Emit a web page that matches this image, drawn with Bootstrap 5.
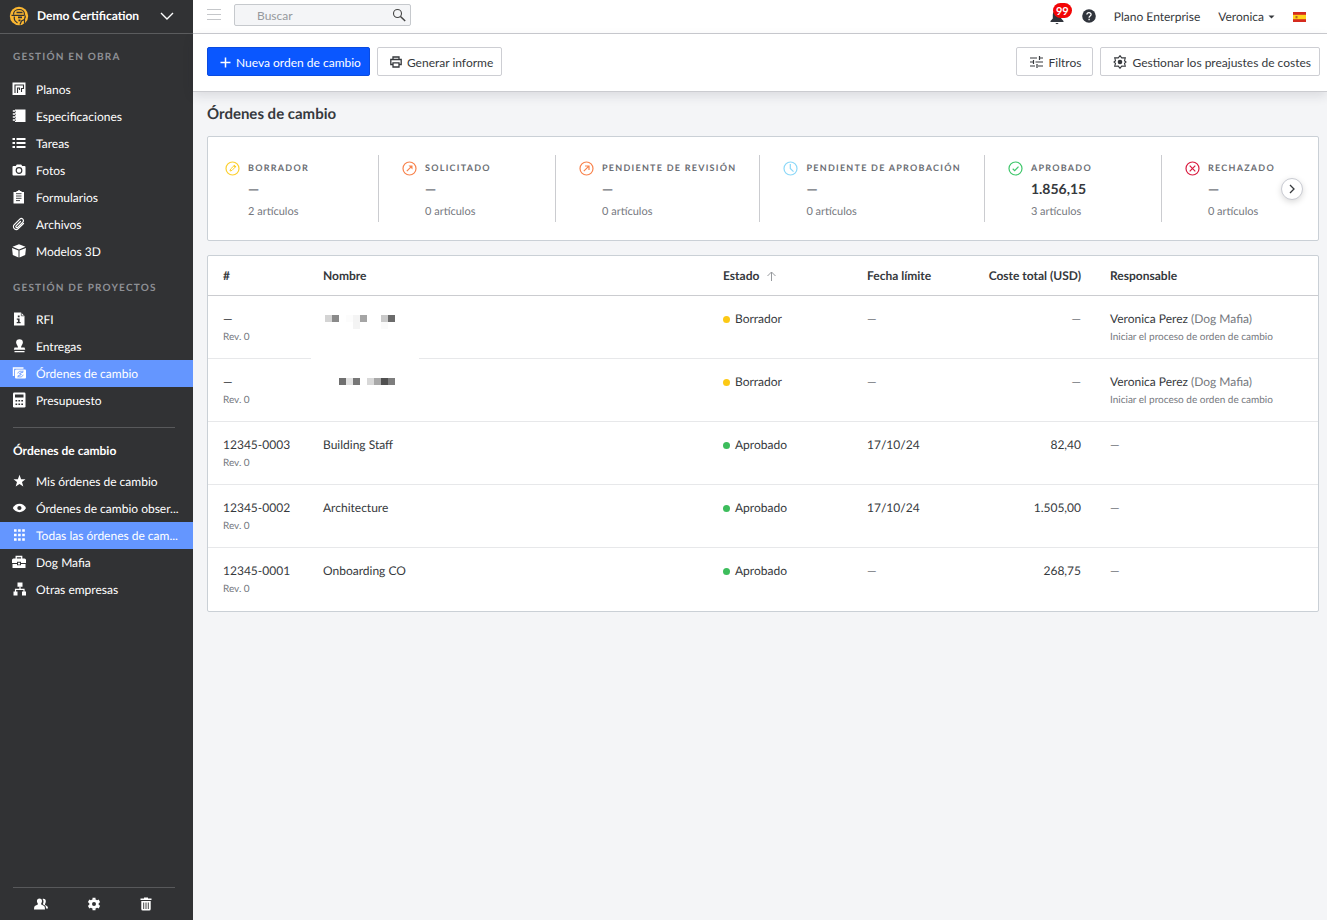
<!DOCTYPE html>
<html lang="es">
<head>
<meta charset="utf-8">
<meta name="viewport" content="width=device-width, initial-scale=1">
<title>Órdenes de cambio</title>
<link href="https://cdn.jsdelivr.net/npm/bootstrap@5.3.0/dist/css/bootstrap.min.css" rel="stylesheet">
<style>
  body { font-family: Lato, "Liberation Sans", sans-serif; font-size: 12px; line-height: 18px; color: #36393d; background: #f4f5f7; text-rendering: geometricPrecision; }
  a { color: inherit; text-decoration: none; }
  svg { display: block; flex: none; }
  /* sidebar */
  .side { width: 193px; background: #313234; color: #fff; }
  .side-head { height: 34px; border-bottom: 1px solid #5b5c5e; padding: 0 19px 2px 9px; }
  .side-title { color: #8e9095; font-size: 10px; font-weight: 700; letter-spacing: .12em; line-height: 14px; padding: 16px 13px 12px; margin: 0; }
  .side-list { list-style: none; margin: 0; padding: 0; }
  .side-list + .side-title { padding-bottom: 11px; }
  .side-link { display: flex; align-items: center; gap: 10px; height: 27px; padding-left: 12px; white-space: nowrap; }
  .side-link svg { margin-bottom: 2px; }
  .side-link.on { background: #6496ff; }
  .side-rule { border-top: 1px solid #58595b; margin: 0 18px 0 13px; }
  .side-rule.mid { margin-top: 13px; }
  .side-sub { font-size: 12px; font-weight: 700; line-height: 18px; margin: 0; padding: 14px 13px 8px; }
  .side-foot { height: 32px; padding: 0 40px 0 33px; }
  .plain { background: none; border: 0; padding: 0; color: inherit; }
  /* top bars */
  .topbar { height: 34px; background: #fff; border-bottom: 1px solid #cbccd0; padding: 0 21px 0 14px; }
  .find { position: relative; width: 177px; margin-left: 13px; }
  .find input { height: 22px; padding: 2px 26px 0 22px; font-size: 12px; background: #f4f5f7; border: 1px solid #c6c9cd; border-radius: 2px; }
  .find input::placeholder { color: #96999d; }
  .find button { position: absolute; right: 5px; top: 4px; }
  .who { gap: 18px; }
  .alerts { position: relative; }
  .count { position: absolute; left: 3px; top: -6px; min-width: 19px; height: 15px; border-radius: 8px; background: #f20505; color: #fff; font-size: 11px; font-weight: 700; line-height: 15px; text-align: center; }
  .tools { background: #fff; border-bottom: 1px solid #cbccd0; box-shadow: 0 4px 10px rgba(40,45,60,.12); padding: 13px 7px 15px 14px; gap: 7px; }
  .tool { display: inline-flex; align-items: center; gap: 5px; height: 29px; padding: 3px 8px 0 12px; font-size: 12px; line-height: 18px; border: 1px solid #cdced3; border-radius: 2px; background: #fff; color: #36393d; }
  .tool svg { margin-bottom: 2px; }
  .tool.main { background: #0a57ff; border-color: #0a4be0; color: #fff; }
  .tool.filter { padding-left: 13px; padding-right: 11px; }
  .tool:hover { background: #f4f5f8; border-color: #cdced3; color: #36393d; }
  .page { padding: 12px 8px 24px 14px; }
  .page-title { font-size: 15px; font-weight: 700; line-height: 20px; margin: 0 0 12px; }
  .panel { background: #fff; border: 1px solid #cad0d6; border-radius: 2px; }
  /* totals strip */
  .totals { position: relative; padding: 18px 17px; margin-bottom: 14px; }
  .total { display: flex; gap: 8px; flex: none; min-width: 177px; height: 67px; padding: 0 23px; border-right: 1px solid #cbccd0; }
  .total:first-child { min-width: 154px; padding-left: 0; }
  .total:last-child { border: 0; min-width: 0; padding-right: 0; }
  .total > svg { margin-top: 6px; }
  .total-name { font-size: 9px; font-weight: 700; letter-spacing: .14em; line-height: 14px; padding: 6px 0 4px; color: #6b6e74; white-space: nowrap; }
  .total-sum { font-size: 14px; font-weight: 700; line-height: 20px; }
  .total-qty { font-size: 11px; line-height: 18px; padding-top: 4px; color: #75787e; }
  .next { position: absolute; right: 15px; top: 41px; width: 22px; height: 22px; border: 1px solid #c9cbd2; border-radius: 50%; background: #fff; display: flex; align-items: center; justify-content: center; padding: 0; box-shadow: 0 2px 6px rgba(0,0,0,.15); }
  /* orders table */
  .orders { table-layout: fixed; width: 100%; margin: 0; color: inherit; }
  .orders th { height: 39px; padding: 2px 0 0 15px; font-weight: 700; vertical-align: middle; }
  .orders td { position: relative; height: 63px; padding: 14px 0 0 15px; vertical-align: top; border-top: 1px solid #e7e8ea; }
  .orders tbody tr:first-child td { border-top-color: #cbccd0; }
  .orders tbody tr:last-child td { height: 64px; }
  .orders .money { text-align: right; padding-left: 0; padding-right: 14px; }
  .w-id { width: 100px; } .w-state { width: 144px; } .w-date { width: 121px; } .w-cost { width: 122px; } .w-resp { width: 223px; }
  .note { display: block; font-size: 10px; line-height: 18px; color: #75787e; }
  .soft { color: #75787e; }
  .dot { display: inline-block; width: 7px; height: 7px; border-radius: 50%; margin-right: 5px; background: #3dbd5c; }
  .dot.draft { background: #fcc915; }
  .redacted { position: absolute; left: 3px; top: 5px; background: #fff; }
</style>
</head>
<body>
<div class="d-flex min-vh-100">

<aside class="side d-flex flex-column flex-shrink-0">
  <header class="side-head d-flex align-items-center">
    <svg width="20" height="20" viewBox="0 0 20 20"><circle cx="10" cy="10" r="9.200" fill="#fbb731"/><path d="M4.500 8.500C4.500 5 7.500 3.500 10.200 3.500s5.300 1.800 5.300 5M2.500 9.300h12.500M5.300 10.500v2.500q0 2 3.200 4M15.500 8.500q1.500 2 0 4.500M11 18.500l1.500-3.500 3-1.500v4" fill="none" stroke="#313234" stroke-width="1.200"/><path d="M7.500 5.800h6v1.400h-6zM9 10.500h4v1.700H9zM9.500 13.500h2v1.800h-2z" fill="#313234"/></svg>
    <b class="ms-2">Demo Certification</b>
    <button class="plain ms-auto" aria-label="Cambiar de proyecto"><svg width="14" height="8" viewBox="0 0 14 8"><path d="M1 1l6 6 6-6" fill="none" stroke="#fff" stroke-width="1.400"/></svg></button>
  </header>
  <nav aria-label="Proyecto">
    <h2 class="side-title">GESTIÓN EN OBRA</h2>
    <ul class="side-list">
      <li><a class="side-link" href="#"><svg width="14" height="14" viewBox="0 0 14 14"><path fill="#fff" d="M.5.500h13v12.500H.5z"/><path d="M3 11V3h8.500v3.500H9.500V10M5.500 11V6h2v2" fill="none" stroke="#313234" stroke-width="1.100"/></svg>Planos</a></li>
      <li><a class="side-link" href="#"><svg width="14" height="14" viewBox="0 0 14 14"><path fill="#fff" d="M3 .5h10.500v12.500H3z"/><path d="M2 2.500h2M2 5.500h2M2 8.500h2M2 11.200h2" stroke="#313234" stroke-width="1.500"/><path d="M.8 2h2.700M.8 5h2.700M.8 8h2.700M.8 11h2.700" stroke="#fff" stroke-width="1.300"/></svg>Especificaciones</a></li>
      <li><a class="side-link" href="#"><svg width="14" height="14" viewBox="0 0 14 14"><path d="M.5 3h2.500M4.500 3h9M.5 7h2.500M4.500 7h9M.5 11h2.500M4.500 11h9" stroke="#fff" stroke-width="2"/></svg>Tareas</a></li>
      <li><a class="side-link" href="#"><svg width="14" height="14" viewBox="0 0 14 14"><path fill="#fff" d="M1.500 3h2.300l1-1.500h4.400l1 1.500h2.300q1 0 1 1v7.500q0 1-1 1h-11q-1 0-1-1V4q0-1 1-1z"/><circle cx="7" cy="7.500" r="2.800" fill="none" stroke="#313234" stroke-width="1.200"/></svg>Fotos</a></li>
      <li><a class="side-link" href="#"><svg width="14" height="14" viewBox="0 0 14 14"><path fill="#fff" d="M1.500 2h3V1H6a1 1 0 0 1 2 0h1.500v1H12v11.500H1.500z"/><path d="M4 3.700h5.500M4 6h5.500M4 8.300h5.500M4 10.600h4" stroke="#313234" stroke-width=".9"/></svg>Formularios</a></li>
      <li><a class="side-link" href="#"><svg width="14" height="14" viewBox="0 0 14 14"><path d="M11.500 6.500L6.300 11.700a2.800 2.800 0 0 1-4-4l5.500-5.500a2 2 0 0 1 3 3L5.700 10.300a1 1 0 0 1-1.500-1.500L8.500 4.500" fill="none" stroke="#fff" stroke-width="1.200" stroke-linecap="round"/></svg>Archivos</a></li>
      <li><a class="side-link" href="#"><svg width="14" height="14" viewBox="0 0 14 14"><path fill="#fff" d="M7 .3l6.500 2.500L7 5.400.5 2.800zM0 4l6.500 2.600v7L.8 11zM14 4L7.500 6.600v7l5.700-2.600z"/></svg>Modelos 3D</a></li>
    </ul>
    <h2 class="side-title">GESTIÓN DE PROYECTOS</h2>
    <ul class="side-list">
      <li><a class="side-link" href="#"><svg width="14" height="14" viewBox="0 0 14 14"><path fill="#fff" d="M2 .5h7L12.500 4v9.500H2z"/><path d="M5.800 3.500h1.800v1.700H5.800zM4.800 6.500h2.800V10h1v1.300H4.700V10h1.200V7.800H4.800z" fill="#313234"/><path d="M9.300.8v3h3" fill="none" stroke="#313234" stroke-width=".7"/></svg>RFI</a></li>
      <li><a class="side-link" href="#"><svg width="14" height="14" viewBox="0 0 14 14"><path fill="#fff" d="M7.500.2a3.400 3.400 0 0 1 3.400 3.300c0 2-1.900 3-1.900 5h3.500l.8 2.300H1.800L2.500 8.500H6c0-2-1.900-3-1.900-5A3.400 3.400 0 0 1 7.500.2zM2.500 12h10v1.300h-10z"/></svg>Entregas</a></li>
      <li><a class="side-link on" href="#" aria-current="page"><svg width="14" height="14" viewBox="0 0 14 14"><path d="M1.500 10V2h10" fill="none" stroke="#fff" stroke-width="1.400"/><rect x="3" y="3.600" width="11" height="9" rx="1" fill="#fff"/><path d="M5.700 7.500a3 3 0 0 1 5-1.500M11.200 8.700a3 3 0 0 1-5 1.500M10.900 4.500v1.900H9M6 11.600V9.700h1.900M9.300 7H7.800v1h1.300v1H7.500" fill="none" stroke="#6496ff" stroke-width=".8"/></svg>Órdenes de cambio</a></li>
      <li><a class="side-link" href="#"><svg width="14" height="16" viewBox="0 0 14 16"><rect x="1" y=".5" width="12.500" height="15" rx="1.200" fill="#fff"/><path fill="#313234" d="M3 2.500h8.500v3H3zM3.500 8h1.700v1.500H3.500zM6.400 8h1.700v1.500H6.400zM9.300 8H11v1.500H9.300zM3.500 11.500h1.700V13H3.500zM6.400 11.500h1.700V13H6.400zM9.300 11.500H11V13H9.300z"/></svg>Presupuesto</a></li>
    </ul>
    <div class="side-rule mid"></div>
    <h2 class="side-sub">Órdenes de cambio</h2>
    <ul class="side-list">
      <li><a class="side-link" href="#"><svg width="14" height="14" viewBox="0 0 14 14"><path fill="#fff" d="M7.500.8l1.600 4.400 4.400.1-3.500 2.800 1.300 4.500-3.800-2.600-3.800 2.600L5 8.100 1.500 5.300l4.400-.1z"/></svg>Mis órdenes de cambio</a></li>
      <li><a class="side-link" href="#"><svg width="14" height="14" viewBox="0 0 14 14"><path fill="#fff" d="M.8 7C3.500 1.300 11.500 1.300 14 7 11.500 12.500 3.500 12.500.8 7z"/><circle cx="7.400" cy="7" r="2.100" fill="#313234"/></svg>Órdenes de cambio obser...</a></li>
      <li><a class="side-link on" href="#" aria-current="page"><svg width="14" height="14" viewBox="0 0 14 14"><path d="M2 2.500h11M2 7h11M2 11.500h11" stroke="#fff" stroke-width="2.600" stroke-dasharray="2.600 1.500"/></svg>Todas las órdenes de cam...</a></li>
      <li><a class="side-link" href="#"><svg width="14" height="14" viewBox="0.500 0 14 14"><path d="M4.700 4V1.500h5.500V4" fill="none" stroke="#fff" stroke-width="1.300"/><path fill="#fff" d="M2 3.500h11q1.500 0 1.500 1.500v3H9.500V6.800h-4V8h-5V5q0-1.500 1.500-1.500zM1 9h4.500v1.200h4V9H14v4H1z"/><path fill="#fff" d="M6.500 7.700h2v1.700h-2z"/></svg>Dog Mafia</a></li>
      <li><a class="side-link" href="#"><svg width="14" height="14" viewBox="0 0 14 14"><path fill="#fff" d="M5.500.500h5v4.300h-5zM1.500 9.500h4v4h-4zM10 9.500h4v4h-4z"/><path d="M8 4.500V7M3.500 10V7.300H12V10" fill="none" stroke="#fff" stroke-width="1.200"/></svg>Otras empresas</a></li>
    </ul>
  </nav>
  <div class="side-rule mt-auto"></div>
  <footer class="side-foot d-flex justify-content-between align-items-center">
    <button class="plain" aria-label="Personas"><svg width="16" height="14" viewBox="0 0 16 14"><path fill="#fff" d="M6.500 1.500c3 0 3 3.300 1.700 5v1l3 1.500q.8.500.8 3.500H1q0-3 .8-3.500l3-1.500v-1c-1.300-1.700-1.300-5 1.700-5zM9.500 2c3.700-1 4 3 2.500 5v1l2 1q1 .6 1 2.500h-2q0-2.400-1-3L9.800 7.300c1-2 1-4-.3-5.300z"/></svg></button>
    <button class="plain" aria-label="Ajustes"><svg width="14" height="14" viewBox="0 0 14 14"><circle cx="7" cy="7" r="3.400" fill="none" stroke="#fff" stroke-width="2.800"/><path d="M7 .8v2M7 11.200v2M1.600 3.900l1.800 1M10.600 9.100l1.800 1M12.400 3.900l-1.800 1M3.400 9.100l-1.800 1" stroke="#fff" stroke-width="3"/></svg></button>
    <button class="plain" aria-label="Papelera"><svg width="14" height="14" viewBox="0 0 14 14"><path fill="#fff" d="M1.500 1.500H5V.500h4v1h3.500v1.500h-11zM2.300 4h9.400v8q0 1.500-1.500 1.500H3.800Q2.300 13.500 2.300 12z"/><path d="M4.700 5.500v6.500M7 5.500v6.500M9.300 5.500v6.500" stroke="#313234" stroke-width=".9"/></svg></button>
  </footer>
</aside>

<div class="flex-grow-1 d-flex flex-column" style="min-width:0">
  <header class="topbar d-flex align-items-center">
    <button class="plain pb-1" aria-label="Menú"><svg width="14" height="11" viewBox="0 0 14 11"><path d="M0 .5h14M0 5.500h14M0 10.500h14" stroke="#c5c7ca"/></svg></button>
    <form class="find mb-1" role="search">
      <input class="form-control" type="text" placeholder="Buscar" aria-label="Buscar">
      <button class="plain" type="button" aria-label="Buscar"><svg width="14" height="14" viewBox="0 0 14 14"><circle cx="5.500" cy="5.500" r="4" fill="none" stroke="#444" stroke-width="1.100"/><path d="M8.500 8.500l4.700 4.500" stroke="#444" stroke-width="1.500"/></svg></button>
    </form>
    <div class="who d-flex align-items-center ms-auto">
      <button class="plain alerts" aria-label="99 avisos"><svg width="14" height="16" viewBox="0 0 14 16"><path fill="#30343c" d="M7 1C3.500 1 2.800 4 2.800 7v2.500L.5 12v1h13v-1l-2.300-2.500V7C11.200 4 10.500 1 7 1zM5.300 14h3.400q-1.700 2.300-3.400 0z"/></svg><span class="count">99</span></button>
      <button class="plain" aria-label="Ayuda"><svg width="14" height="16" viewBox="0 0 14 16"><circle cx="7" cy="7" r="6.800" fill="#30343c"/><path d="M4.900 5.600c.1-2.700 4.300-2.500 4.200 0 0 1.500-2 1.500-2 3.200M7.100 9.700v1.500" fill="none" stroke="#fff" stroke-width="1.300"/></svg></button>
      <a href="#">Plano Enterprise</a>
      <a class="d-flex align-items-center" href="#">Veronica<svg class="ms-1" width="7" height="4" viewBox="0 0 7 4"><path d="M.5.500h6l-3 3z" fill="#36393d"/></svg></a>
      <button class="plain" aria-label="Español"><svg width="13" height="10" viewBox="0 0 13 10"><path fill="#d52b1e" d="M0 0h13v10H0z"/><path fill="#ffd21a" d="M0 2.800h13v4.400H0z"/><path fill="#b5651d" d="M2.500 4h2v2.300h-2z"/></svg></button>
    </div>
  </header>
  <div class="tools d-flex">
    <button class="btn tool main"><svg width="11" height="11" viewBox="0 0 11 11"><path d="M5.500.500v10M.5 5.500h10" stroke="#fff" stroke-width="1.500"/></svg>Nueva orden de cambio</button>
    <button class="btn tool"><svg width="12" height="12" viewBox="0 0 12 12"><path d="M3 3.500V1h6v2.500M3 8.500H.8v-5h10.400v5H9M3 6.800h6V11H3z" fill="none" stroke="#36393d" stroke-width="1.300"/></svg>Generar informe</button>
    <button class="btn tool filter ms-auto"><svg width="14" height="12" viewBox="0 0 14 12"><path d="M0 2h7M9.500 2H13M9.500 0v4M0 6h3M5.500 6H13M3.500 4v4M0 10h5M8 10h5M7 8v4" stroke="#36393d" stroke-width="1.200"/></svg>Filtros</button>
    <button class="btn tool"><svg width="14" height="14" viewBox="0 0 14 14"><path d="M7 .7l1.700 2.200 3.600-.1-.8 2.900L13 7l-1.500 1.400.8 2.800-3.600-.1L7 13.300l-1.700-2.200-3.600.1.800-2.800L1 7l1.500-1.300-.8-2.900 3.600.1z" fill="none" stroke="#36393d" stroke-width="1.100"/><circle cx="7" cy="7" r="2.300" fill="#36393d"/></svg>Gestionar los preajustes de costes</button>
  </div>

  <main class="page">
    <h1 class="page-title">Órdenes de cambio</h1>

    <section class="panel totals d-flex" aria-label="Totales">
      <div class="total"><svg width="15" height="15" viewBox="0 0 15 15"><circle cx="7.500" cy="7.500" r="6.500" fill="none" stroke="#fcd030" stroke-width="1.200"/><path d="M5 10l.6-2 3.700-3.600 1.300 1.300L7 9.400z" fill="none" stroke="#fcd030"/><path d="M8.500 5l1-1 1.600 1.500-1 1z" fill="#fcc915"/></svg><div><div class="total-name">BORRADOR</div><div class="total-sum soft">—</div><div class="total-qty">2 artículos</div></div></div>
      <div class="total"><svg width="15" height="15" viewBox="0 0 15 15"><circle cx="7.500" cy="7.500" r="6.500" fill="none" stroke="#f8834d" stroke-width="1.200"/><path d="M4.800 10.200l4.500-4.500" stroke="#f8834d" stroke-width="1.200"/><path d="M6.500 4.500h4v4z" fill="#f8834d"/></svg><div><div class="total-name">SOLICITADO</div><div class="total-sum soft">—</div><div class="total-qty">0 artículos</div></div></div>
      <div class="total"><svg width="15" height="15" viewBox="0 0 15 15"><circle cx="7.500" cy="7.500" r="6.500" fill="none" stroke="#f8834d" stroke-width="1.200"/><path d="M4.800 10.200l5-5M6 5h4v4" fill="none" stroke="#f8834d" stroke-width="1.200"/></svg><div><div class="total-name">PENDIENTE DE REVISIÓN</div><div class="total-sum soft">—</div><div class="total-qty">0 artículos</div></div></div>
      <div class="total"><svg width="15" height="15" viewBox="0 0 15 15"><circle cx="7.500" cy="7.500" r="6.500" fill="none" stroke="#8cd8f8" stroke-width="1.200"/><path d="M7.300 3v4.500l3.200 3.200" fill="none" stroke="#8cd8f8" stroke-width="1.200"/></svg><div><div class="total-name">PENDIENTE DE APROBACIÓN</div><div class="total-sum soft">—</div><div class="total-qty">0 artículos</div></div></div>
      <div class="total"><svg width="15" height="15" viewBox="0 0 15 15"><circle cx="7.500" cy="7.500" r="6.500" fill="none" stroke="#3fc76b" stroke-width="1.200"/><path d="M4.700 7.800l2 1.900 3.800-4" fill="none" stroke="#3fc76b" stroke-width="1.200"/></svg><div><div class="total-name">APROBADO</div><div class="total-sum">1.856,15</div><div class="total-qty">3 artículos</div></div></div>
      <div class="total"><svg width="15" height="15" viewBox="0 0 15 15"><circle cx="7.500" cy="7.500" r="6.500" fill="none" stroke="#d91c40" stroke-width="1.200"/><path d="M4.700 4.700l5.600 5.600M10.300 4.700l-5.600 5.600" stroke="#d91c40" stroke-width="1.200"/></svg><div><div class="total-name">RECHAZADO</div><div class="total-sum soft">—</div><div class="total-qty">0 artículos</div></div></div>
      <button class="next" aria-label="Siguiente"><svg width="8" height="10" viewBox="0 0 8 10"><path d="M2 1l4 4-4 4" fill="none" stroke="#36393d" stroke-width="1.300"/></svg></button>
    </section>

    <section class="panel">
      <table class="orders">
        <colgroup><col class="w-id"><col><col class="w-state"><col class="w-date"><col class="w-cost"><col class="w-resp"></colgroup>
        <thead>
          <tr><th scope="col">#</th><th scope="col">Nombre</th><th scope="col"><span class="d-flex align-items-center">Estado<svg class="ms-2" width="9" height="10" viewBox="0 0 9 10"><path d="M4.500 10V1M.5 5l4-4 4 4" fill="none" stroke="#96999d"/></svg></span></th><th scope="col">Fecha límite</th><th scope="col" class="money">Coste total (USD)</th><th scope="col">Responsable</th></tr>
        </thead>
        <tbody>
          <tr><td>—<span class="note">Rev. 0</span></td>
            <td><svg class="redacted" width="108" height="61" viewBox="0 0 108 61" role="img" aria-label="Nombre oculto" shape-rendering="crispEdges"><path fill="#d4d4d4" d="M14 14h7v7h-7z"/><path fill="#8a8a8a" d="M21 14h7v7h-7z"/><path fill="#fcfcfc" d="M35 14h7v7h-7z"/><path fill="#f4f4f4" d="M42 14h7v14h-7z"/><path fill="#a5a5a5" d="M49 14h7v7h-7z"/><path fill="#c9c9c9" d="M70 14h7v7h-7z"/><path fill="#6b6b6b" d="M77 14h7v7h-7z"/><path fill="#fafafa" d="M70 21h7v7h-7z"/></svg></td>
            <td><span class="dot draft"></span>Borrador</td><td class="soft">—</td><td class="money soft">—</td><td>Veronica Perez <span class="soft">(Dog Mafia)</span><span class="note">Iniciar el proceso de orden de cambio</span></td></tr>
          <tr><td>—<span class="note">Rev. 0</span></td>
            <td><svg class="redacted" width="108" height="50" viewBox="0 0 108 50" role="img" aria-label="Nombre oculto" shape-rendering="crispEdges"><path fill="#6f6f6f" d="M28 14h7v7h-7z"/><path fill="#e2e2e2" d="M35 14h7v7h-7z"/><path fill="#777" d="M42 14h7v7h-7z"/><path fill="#d8d8d8" d="M56 14h7v7h-7z"/><path fill="#a8a8a8" d="M63 14h7v7h-7z"/><path fill="#505050" d="M70 14h7v7h-7z"/><path fill="#7d7d7d" d="M77 14h7v7h-7z"/></svg></td>
            <td><span class="dot draft"></span>Borrador</td><td class="soft">—</td><td class="money soft">—</td><td>Veronica Perez <span class="soft">(Dog Mafia)</span><span class="note">Iniciar el proceso de orden de cambio</span></td></tr>
          <tr><td>12345-0003<span class="note">Rev. 0</span></td><td>Building Staff</td><td><span class="dot"></span>Aprobado</td><td>17/10/24</td><td class="money">82,40</td><td class="soft">—</td></tr>
          <tr><td>12345-0002<span class="note">Rev. 0</span></td><td>Architecture</td><td><span class="dot"></span>Aprobado</td><td>17/10/24</td><td class="money">1.505,00</td><td class="soft">—</td></tr>
          <tr><td>12345-0001<span class="note">Rev. 0</span></td><td>Onboarding CO</td><td><span class="dot"></span>Aprobado</td><td class="soft">—</td><td class="money">268,75</td><td class="soft">—</td></tr>
        </tbody>
      </table>
    </section>
  </main>
</div>
</div>
<script src="https://cdn.jsdelivr.net/npm/bootstrap@5.3.0/dist/js/bootstrap.bundle.min.js"></script>
</body>
</html>
